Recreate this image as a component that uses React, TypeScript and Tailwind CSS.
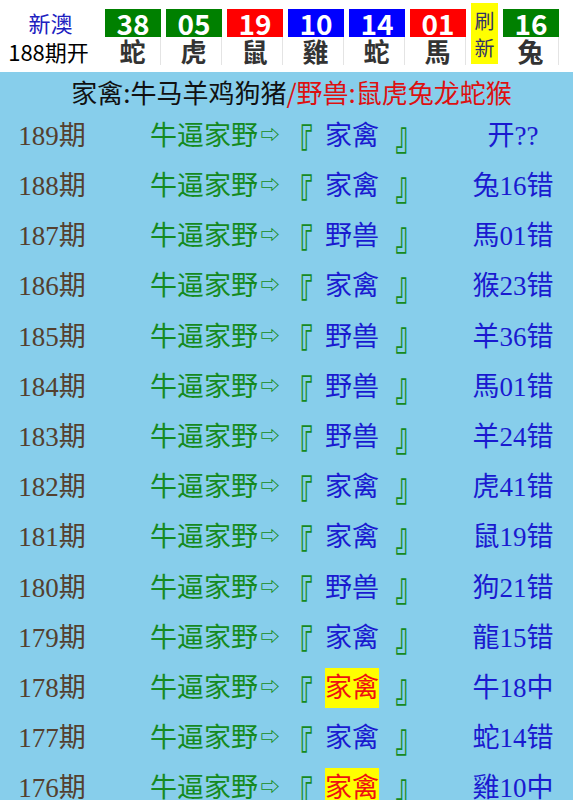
import React from 'react';

// 开奖号码
const balls = [
  { num: '38', sx: '蛇', bg: 'bg-[#008000]' },
  { num: '05', sx: '虎', bg: 'bg-[#008000]' },
  { num: '19', sx: '鼠', bg: 'bg-[#ff0000]' },
  { num: '10', sx: '雞', bg: 'bg-[#0000ff]' },
  { num: '14', sx: '蛇', bg: 'bg-[#0000ff]' },
  { num: '01', sx: '馬', bg: 'bg-[#ff0000]' },
];

const rows = [
  { qi: '189', pick: '家禽', res: '开??', hit: false },
  { qi: '188', pick: '家禽', res: '兔16错', hit: false },
  { qi: '187', pick: '野兽', res: '馬01错', hit: false },
  { qi: '186', pick: '家禽', res: '猴23错', hit: false },
  { qi: '185', pick: '野兽', res: '羊36错', hit: false },
  { qi: '184', pick: '野兽', res: '馬01错', hit: false },
  { qi: '183', pick: '野兽', res: '羊24错', hit: false },
  { qi: '182', pick: '家禽', res: '虎41错', hit: false },
  { qi: '181', pick: '家禽', res: '鼠19错', hit: false },
  { qi: '180', pick: '野兽', res: '狗21错', hit: false },
  { qi: '179', pick: '家禽', res: '龍15错', hit: false },
  { qi: '178', pick: '家禽', res: '牛18中', hit: true },
  { qi: '177', pick: '家禽', res: '蛇14错', hit: false },
  { qi: '176', pick: '家禽', res: '雞10中', hit: true },
];

function Ball({ num, sx, bg }: { num: string; sx: string; bg: string }) {
  return (
    <div className="w-[56px] flex flex-col">
      <div className={`${bg} h-[28px] flex items-center justify-center text-white font-bold text-[28px] leading-none`}>
        {num}
      </div>
      <div className="h-[28px] flex items-center justify-center text-[#333] font-bold text-[26px] leading-none border-r border-[#e4e4e4]">
        {sx}
      </div>
    </div>
  );
}

export default function App() {
  return (
    <div className="w-[576px] h-[800px] overflow-hidden bg-white font-['Noto_Sans_CJK_SC',sans-serif]">
      {/* 顶部开奖 */}
      <div className="h-[72px] flex items-start pt-[9px]">
        <div className="w-[105px] flex flex-col items-center -mt-[2px]">
          <div className="text-[#2020c0] text-[22px] leading-[30px] -ml-[4px]">新澳</div>
          <div className="text-black text-[22px] leading-[28px] -ml-[8px]">188期开</div>
        </div>
        <div className="flex gap-[5px]">
          {balls.map((b, i) => (
            <Ball key={i} {...b} />
          ))}
          <div className="w-[27px] -mt-[6px] h-[61px] bg-[#ffff00] flex flex-col items-center justify-center text-[#333366] text-[20px] leading-[27px]">
            <span>刷</span>
            <span>新</span>
          </div>
          <Ball num="16" sx="兔" bg="bg-[#008000]" />
        </div>
      </div>

      {/* 列表 */}
      <div className="w-[573px] bg-[#87ceeb] h-[728px]">
        <div className="h-[39px] flex items-center justify-center text-[26px] leading-none pl-[10px]">
          <span className="text-[#111]">家禽:牛马羊鸡狗猪</span>
          <span className="text-[#dd1111]">/野兽:鼠虎兔龙蛇猴</span>
        </div>
        <div className="font-['Liberation_Serif','Noto_Sans_CJK_SC',serif] text-[27px]">
          {rows.map((r) => (
            <div key={r.qi} className="h-[50.2px] flex items-center">
              <div className="w-[104px] text-center text-[#54402f]">{r.qi}期</div>
              <div className="w-[349px] pl-[46px] flex items-center whitespace-nowrap">
                <span className="text-[#158a20]">牛逼家野</span>
                <span className="w-[24px] text-center text-[#158a20] text-[19px] font-bold">⇨</span>
                <span className="w-[28px] ml-[3px] text-center text-[#158a20] font-bold leading-none font-['Noto_Sans_CJK_TC',sans-serif] scale-y-[1.4] translate-y-[4px]">『</span>
                <span className={`ml-[12px] ${r.hit ? 'bg-[#ffff00] text-[#ee1111]' : 'text-[#1a1ad0]'}`}>{r.pick}</span>
                <span className="w-[28px] ml-[16px] text-center text-[#158a20] font-bold leading-none font-['Noto_Sans_CJK_TC',sans-serif] scale-y-[1.4] -translate-y-[4px]">』</span>
              </div>
              <div className="w-[120px] text-center text-[#1a1ad0]">{r.res}</div>
            </div>
          ))}
        </div>
      </div>
    </div>
  );
}
